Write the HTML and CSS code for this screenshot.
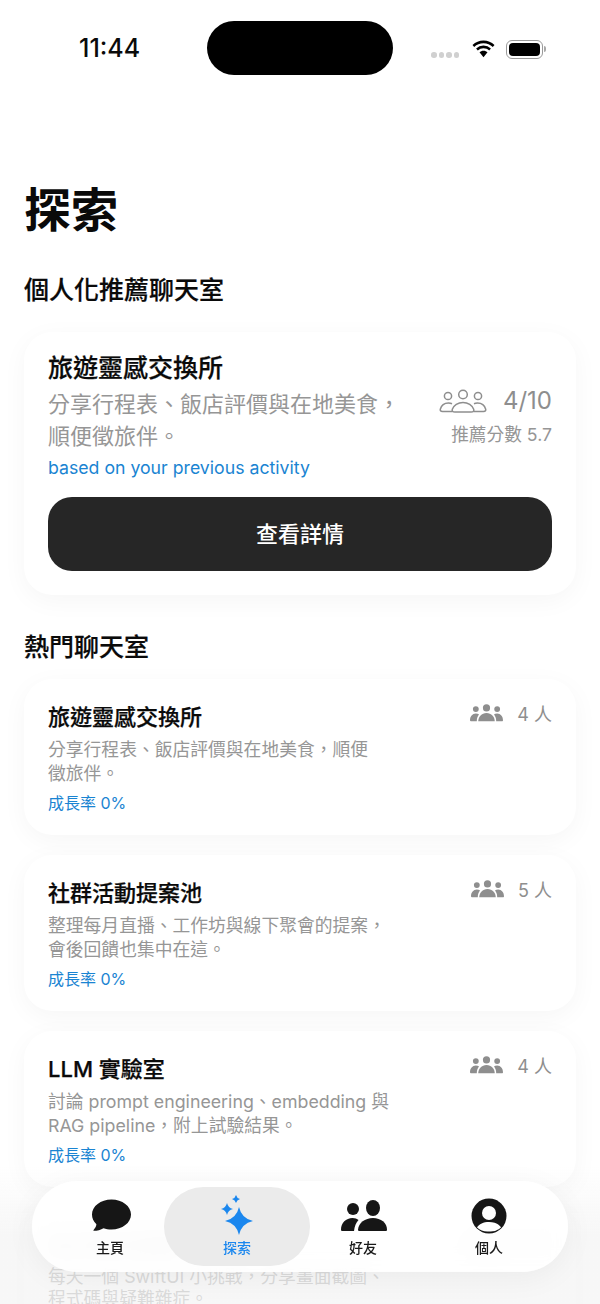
FILE: index.html
```html
<!DOCTYPE html>
<html lang="zh-Hant">
<head>
<meta charset="utf-8">
<title>探索</title>
<link rel="stylesheet" href="styles.css">
</head>
<body>
<div class="screen">
  <header class="status">
    <span class="time">11:44</span>
    <div class="island"></div>
    <div class="sys">
      <div class="dots"><i></i><i></i><i></i><i></i></div>
      <svg class="wifi" viewBox="0 0 24 18"><path d="M12 3.200c3.600 0 6.900 1.400 9.300 3.700l1.700-2A16 16 0 0 0 12 .4 16 16 0 0 0 1 4.900l1.700 2A13.400 13.400 0 0 1 12 3.200z"/><path d="M12 8.300c2.200 0 4.200.8 5.700 2.200l1.700-2A11 11 0 0 0 12 5.500a11 11 0 0 0-7.400 3l1.700 2A8.300 8.300 0 0 1 12 8.300z"/><path d="M12 10.700c-1.600 0-3 .6-4 1.600l4 4.900 4-4.900c-1-1-2.400-1.600-4-1.600z"/></svg>
      <div class="battery"><div class="level"></div></div><div class="nub"></div>
    </div>
  </header>

  <main class="content">
    <h1 class="page-title">探索</h1>
    <h2 class="section">個人化推薦聊天室</h2>

    <section class="card featured">
      <div class="feat-top">
        <div class="feat-text">
          <h3 class="feat-title">旅遊靈感交換所</h3>
          <p class="feat-desc">分享行程表、飯店評價與在地美食，<br>順便徵旅伴。</p>
        </div>
        <div class="feat-meta">
          <div class="feat-count">
            <svg class="people-line" viewBox="0 0 48 24" fill="none" stroke="#8e8e8e" stroke-width="1.500">
              <circle cx="9" cy="7" r="3.600"/><circle cx="24" cy="5.500" r="4.300"/><circle cx="39" cy="7" r="3.600"/>
              <path d="M13.500 22.500H3.500C1.500 22.500 1 21.500 1.300 20.200 2.300 16.500 5.500 14 9.500 14c1.300 0 2.400.2 3.500.7"/>
              <path d="M34.500 22.500H44.500C46.500 22.500 47 21.500 46.700 20.200 45.700 16.500 42.500 14 38.500 14c-1.300 0-2.400.2-3.500.7"/>
              <path d="M16 23C13.500 23 12.800 21.700 13.300 20.300 14.700 16.500 19 13.500 24 13.500s9.300 3 10.700 6.800C35.200 21.700 34.500 23 32 23z"/>
            </svg>
            <span class="count-num">4/10</span>
          </div>
          <div class="score">推薦分數 5.7</div>
        </div>
      </div>
      <div class="reason">based on your previous activity</div>
      <button class="cta">查看詳情</button>
    </section>

    <h2 class="section hot">熱門聊天室</h2>

    <div class="list">
      <article class="card room">
        <div class="room-head"><h3 class="room-title">旅遊靈感交換所</h3>
          <div class="room-count"><svg class="people-solid"><use href="#people3"/></svg><span>4 人</span></div></div>
        <p class="room-desc">分享行程表、飯店評價與在地美食，順便<br>徵旅伴。</p>
        <div class="growth">成長率 0%</div>
      </article>
      <article class="card room">
        <div class="room-head"><h3 class="room-title">社群活動提案池</h3>
          <div class="room-count"><svg class="people-solid"><use href="#people3"/></svg><span>5 人</span></div></div>
        <p class="room-desc">整理每月直播、工作坊與線下聚會的提案，<br>會後回饋也集中在這。</p>
        <div class="growth">成長率 0%</div>
      </article>
      <article class="card room">
        <div class="room-head"><h3 class="room-title">LLM 實驗室</h3>
          <div class="room-count"><svg class="people-solid"><use href="#people3"/></svg><span>4 人</span></div></div>
        <p class="room-desc">討論 prompt engineering、embedding 與<br>RAG pipeline，附上試驗結果。</p>
        <div class="growth">成長率 0%</div>
      </article>
      <article class="card room">
        <div class="room-head"><h3 class="room-title">每日程式挑戰</h3>
          <div class="room-count"><svg class="people-solid"><use href="#people3"/></svg><span>6 人</span></div></div>
        <p class="room-desc last">每天一個 SwiftUI 小挑戰，分享畫面截圖、<br>程式碼與疑難雜症。</p>
      </article>
    </div>
  </main>

  <div class="fade"></div>

  <nav class="tabbar">
    <div class="tab">
      <svg class="tab-icon" viewBox="0 0 48 42"><path fill="#161616" d="M25.500 4.500C36.300 4.500 45 11.200 45 19.500S36.300 34.500 25.500 34.500c-3 0-5.700-.4-8-1.300-2.500 1.700-6.500 2.600-9.500 2.600-.6 0-.8-.5-.4-.9 1.500-1.500 2.700-3.600 2.800-5.600C7.500 26.500 6 23.200 6 19.500 6 11.200 14.700 4.500 25.500 4.500z"/></svg>
      <span>主頁</span>
    </div>
    <div class="tab active">
      <svg class="tab-icon" viewBox="0 0 48 42" fill="#1b87ee"><path d="M26 12Q28.500 23.500 40 26 28.500 28.500 26 40 23.500 28.500 12 26 23.500 23.500 26 12z"/><path d="M14 8Q15.200 12.800 20 14 15.200 15.200 14 20 12.800 15.200 8 14 12.800 12.800 14 8z"/><path d="M23 0Q23.800 3.200 27 4 23.800 4.800 23 8 22.200 4.800 19 4 22.200 3.200 23 0z"/></svg>
      <span>探索</span>
    </div>
    <div class="tab">
      <svg class="tab-icon" viewBox="0 0 48 42" fill="#161616"><circle cx="14" cy="14" r="6"/><ellipse cx="34" cy="13" rx="7" ry="8"/><path d="M2 34.500C2 28 7 23 13.500 23c2.500 0 4.500.7 6 2-2.500 2.800-4 6.500-4.500 11H3.500C2.500 36 2 35.500 2 34.500z"/><path d="M19 34.500C19.500 28 26 23 34 23s14 5 14 11.500c0 1-.5 1.500-1.500 1.500h-26c-1 0-1.500-.5-1.500-1.500z"/></svg>
      <span>好友</span>
    </div>
    <div class="tab">
      <svg class="tab-icon" viewBox="0 0 48 42"><circle cx="24" cy="21" r="17.500" fill="#161616"/><circle cx="24" cy="18" r="7" fill="#fff"/><path fill="#fff" d="M12 32.500C14 29 18.500 27 24 27s10 2 12 5.500A15.500 15.500 0 0 1 24 36.500 15.500 15.500 0 0 1 12 32.500z"/></svg>
      <span>個人</span>
    </div>
  </nav>

  <svg class="defs" width="0" height="0">
    <symbol id="people3" viewBox="0 0 34 18">
      <g fill="#8e8e8e">
        <circle cx="6" cy="5" r="3"/><circle cx="17" cy="3.800" r="3.700"/><circle cx="28" cy="5" r="3"/>
        <path d="M0 16.500C0 12.500 2.500 9.500 6 9.500c1.300 0 2.500.4 3.300 1.100C8 12 7 14.500 7 17.500H1c-.6 0-1-.4-1-1z"/>
        <path d="M34 16.500C34 12.500 31.500 9.500 28 9.500c-1.300 0-2.500.4-3.300 1.100 1.300 1.400 2.300 3.900 2.300 6.900h6c.6 0 1-.4 1-1z"/>
        <path d="M8.500 17.500c0-4.500 3.500-8.500 8.500-8.500s8.500 4 8.500 8.500z"/>
      </g>
    </symbol>
  </svg>
</div>
</body>
</html>
```
FILE: styles.css
```css
* { box-sizing: border-box; }
html, body { margin: 0; padding: 0; background: #fff; }
body { font-family: Inter, "Noto Sans CJK TC", sans-serif; color: #0a0a0a; }
h1, h2, h3, p { margin: 0; }

.screen { position: relative; width: 600px; height: 1304px; overflow: hidden; background: #fff; }

.status { display: flex; align-items: flex-start; height: 96px; padding: 21px 53px 0 79px; }
.time { width: 128px; margin-top: 11px; font-size: 25px; line-height: 32px; font-weight: 500; }
.island { width: 186px; height: 54px; border-radius: 27px; background: #000; }
.sys { display: flex; align-items: center; height: 16px; margin: 20px 0 0 38px; }
.dots { display: flex; gap: 2px; margin-top: 12px; }
.dots i { width: 5.500px; height: 5.500px; border-radius: 50%; background: #d0d0d0; }
.wifi { width: 25px; height: 18px; margin-left: 12px; }
.battery { width: 37px; height: 19px; margin-left: 10px; padding: 2px; border: 1px solid #9a9a9a; border-radius: 6px; }
.level { width: 100%; height: 100%; border-radius: 4px; background: #000; }
.nub { width: 2px; height: 6px; margin-left: 1px; border-radius: 0 2px 2px 0; background: #a8a8a8; }

.content { padding: 0 24px; }
.page-title { margin-top: 85px; font-size: 47px; line-height: 58px; font-weight: 700; }
.section { margin-top: 34px; font-size: 25px; line-height: 34px; font-weight: 500; -webkit-text-stroke: .2px currentColor; }
.section.hot { margin-top: 35px; }

.card { background: #fff; border-radius: 28px; box-shadow: 0 6px 26px rgba(0, 0, 0, .04); }

.featured { margin-top: 25px; height: 263px; padding: 19px 24px 24px; }
.feat-top { display: flex; justify-content: space-between; }
.feat-text { width: 360px; }
.feat-title { font-size: 25px; line-height: 34px; font-weight: 500; -webkit-text-stroke: .25px currentColor; }
.feat-desc { margin-top: 3px; font-size: 22px; line-height: 32px; color: #969696; }
.feat-meta { display: flex; flex-direction: column; align-items: flex-end; padding-top: 34px; }
.feat-count { display: flex; align-items: center; gap: 16px; height: 32px; }
.people-line { width: 48px; height: 24px; }
.count-num { font-size: 24px; line-height: 32px; color: #8e8e8e; }
.score { margin-top: 6px; font-size: 17.700px; line-height: 24px; color: #969696; }
.reason { margin-top: 4px; font-size: 17.700px; line-height: 24px; color: #1a84d2; }
.cta { display: block; width: 100%; height: 74px; margin-top: 17px; border: 0; border-radius: 24px; background: #262626; color: #fff; font: 500 22px/30px Inter, "Noto Sans CJK TC", sans-serif; }

.list { display: flex; flex-direction: column; gap: 20px; margin-top: 15px; }
.room { height: 156px; padding: 22px 24px 0; }
.room-head { display: flex; justify-content: space-between; align-items: flex-start; }
.room-title { font-size: 22px; line-height: 32px; font-weight: 500; -webkit-text-stroke: .25px currentColor; }
.room-count { display: flex; align-items: center; gap: 14px; height: 23px; font-size: 18px; color: #8e8e8e; }
.people-solid { width: 33px; height: 18px; }
.room-desc { width: 400px; margin-top: 5px; font-size: 17.800px; line-height: 24px; color: #969696; }
.room-desc.last { line-height: 22px; }
.growth { margin-top: 5px; font-size: 16px; line-height: 24px; color: #1a84d2; }

.fade { position: absolute; left: 0; right: 0; top: 1165px; bottom: 0; background: linear-gradient(rgba(244, 244, 244, 0), rgba(244, 244, 244, .72) 50%); backdrop-filter: blur(.6px); }

.tabbar { position: absolute; left: 32px; top: 1181px; width: 536px; height: 91px; display: grid; grid-template-columns: 108px 146px 106px 146px; padding: 6px 6px 6px 24px; border-radius: 46px; background: rgba(255, 255, 255, .9); backdrop-filter: blur(10px); box-shadow: 0 6px 30px rgba(0, 0, 0, .05); }
.tab { display: flex; flex-direction: column; align-items: center; height: 79px; padding-top: 8px; font-size: 14px; line-height: 20px; font-weight: 500; color: #1a1a1a; }
.tab.active { border-radius: 40px; background: #ebebeb; color: #1b87ee; }
.tab-icon { width: 48px; height: 42px; margin-bottom: 1px; }
.defs { position: absolute; }
```
